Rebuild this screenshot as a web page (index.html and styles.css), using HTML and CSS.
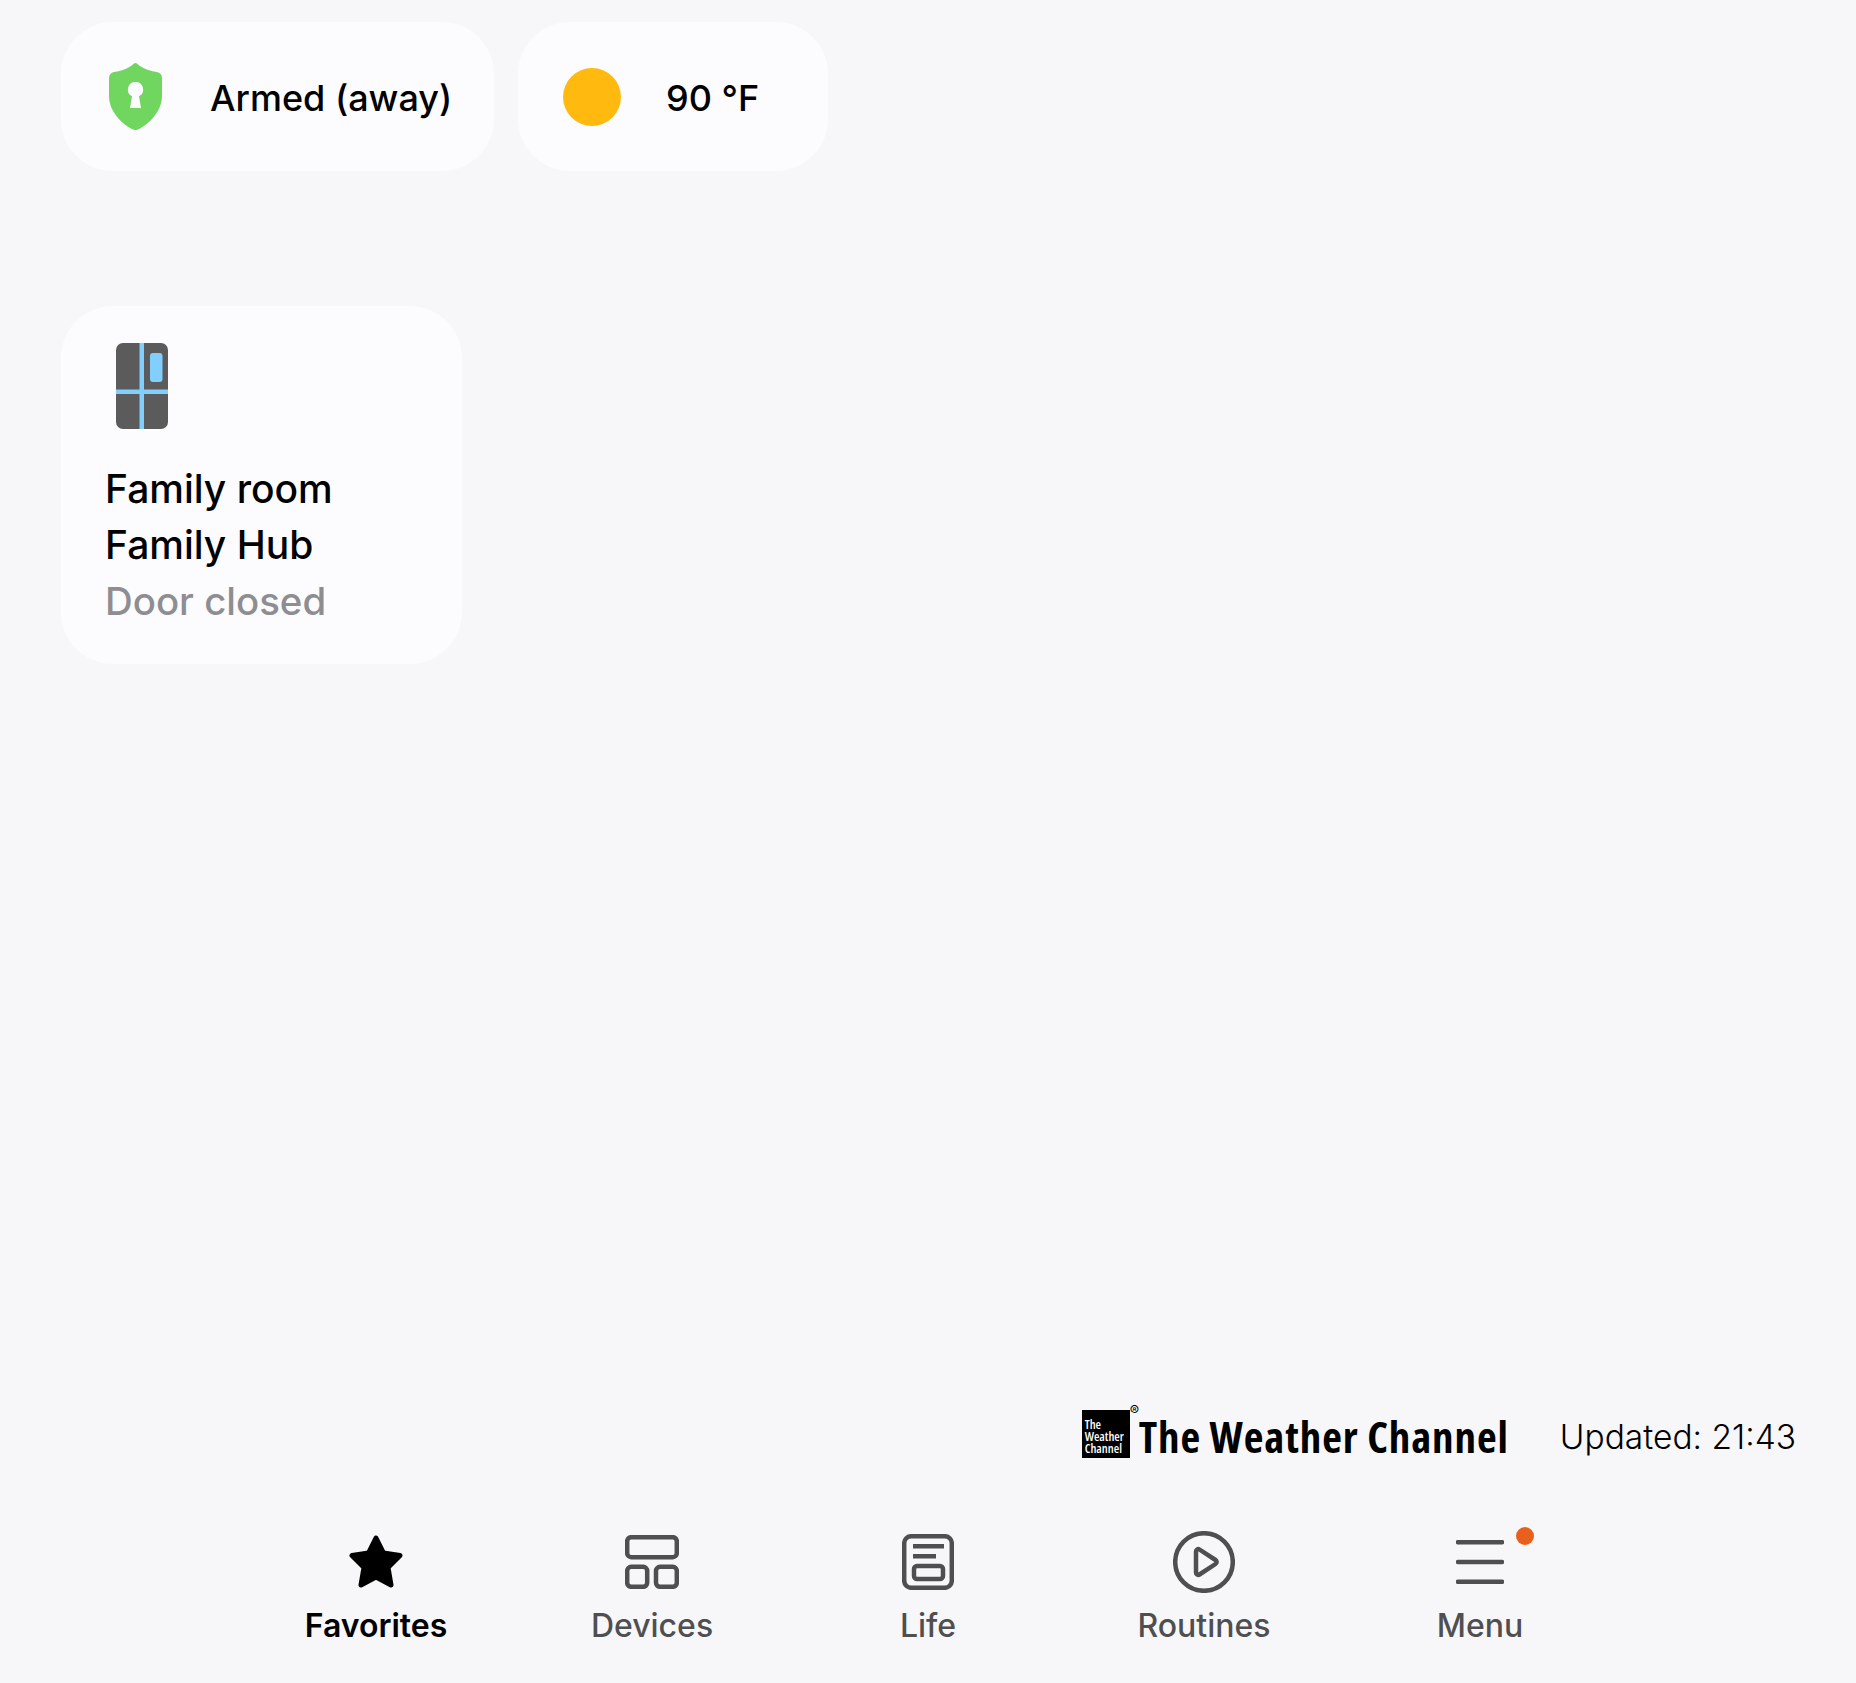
FILE: index.html
```html
<!doctype html>
<html lang="en">

<head>
  <meta charset="utf-8">
  <meta name="viewport" content="width=device-width, initial-scale=1">
  <title>Favorites</title>
  <link rel="stylesheet" href="styles.css">
</head>

<body>
  <main class="page">
    <div class="status-row">
      <div class="status-card status-mode">
        <svg class="icon-shield" viewBox="0 0 53 67">
          <path fill="#70d65f" d="M26.500 0C28 0 29 1.500 31 3C36 6.500 42 8 48 9C51 9.500 53 11.500 53 15V33C53 47 42 60 29 66.500C27.500 67.200 25.500 67.200 24 66.500C11 60 0 47 0 33V15C0 11.500 2 9.500 5 9C11 8 17 6.500 22 3C24 1.500 25 0 26.500 0Z"/>
          <path fill="#fcfcfe" d="M26.500 19A7.500 7.500 0 0 1 30 33.200L32 45H21L23 33.200A7.500 7.500 0 0 1 26.500 19Z"/>
        </svg>
        <span class="status-text">Armed (away)</span>
      </div>
      <div class="status-card status-weather">
        <span class="sun"></span>
        <span class="status-text">90 °F</span>
      </div>
    </div>

    <div class="device-card">
      <svg class="icon-fridge" viewBox="0 0 52 86">
        <rect width="52" height="86" rx="7" fill="#5b5b5b"/>
        <rect x="23.500" width="4.500" height="86" fill="#82ceff"/>
        <rect y="46.500" width="52" height="4.500" fill="#82ceff"/>
        <rect x="34" y="10" width="12.500" height="29" rx="3" fill="#82ceff"/>
      </svg>
      <div class="device-name">Family room</div>
      <div class="device-name">Family Hub</div>
      <div class="device-state">Door closed</div>
    </div>

    <div class="weather-row">
      <div class="twc">
        <div class="twc-box">The<br>Weather<br>Channel</div>
        <span class="twc-reg">®</span>
        <span class="twc-name">The Weather Channel</span>
      </div>
      <div class="updated">Updated: 21:43</div>
    </div>

    <nav class="nav">
      <div class="nav-item active">
        <div class="nav-icon">
          <svg width="54" height="54" viewBox="0 0 54 54">
            <polygon points="27,3 34.500,18 51,20.500 39,32.500 42,50 27,42 12,50 15,32.500 3,20.500 19.500,18" fill="#000" stroke="#000" stroke-width="5" stroke-linejoin="round"/>
          </svg>
        </div>
        <span>Favorites</span>
      </div>
      <div class="nav-item">
        <div class="nav-icon">
          <svg width="54" height="54" viewBox="0 0 54 54" fill="none" stroke="#4f4f51" stroke-width="4.500">
            <rect x="2.200" y="2.200" width="49.600" height="20" rx="4"/>
            <rect x="2.200" y="31.800" width="20" height="20" rx="4"/>
            <rect x="31" y="31.800" width="20.800" height="20" rx="4"/>
          </svg>
        </div>
        <span>Devices</span>
      </div>
      <div class="nav-item">
        <div class="nav-icon">
          <svg width="52" height="56" viewBox="0 0 52 56" fill="none" stroke="#4f4f51" stroke-width="4.500">
            <rect x="2.200" y="2.200" width="47.600" height="51.600" rx="7"/>
            <rect x="11" y="10" width="31" height="4.500" fill="#4f4f51" stroke="none"/>
            <rect x="11" y="20" width="23" height="4.500" fill="#4f4f51" stroke="none"/>
            <rect x="12" y="32" width="29" height="13" rx="3"/>
          </svg>
        </div>
        <span>Life</span>
      </div>
      <div class="nav-item">
        <div class="nav-icon">
          <svg width="62" height="62" viewBox="0 0 62 62" fill="none" stroke="#4f4f51" stroke-width="4.500">
            <circle cx="31" cy="31" r="28.800"/>
            <path d="M23 20.500C23 18.500 25 17.500 26.500 18.500L42.500 29C44 30 44 32 42.500 33L26.500 43.500C25 44.500 23 43.500 23 41.500Z" stroke-linejoin="round"/>
          </svg>
        </div>
        <span>Routines</span>
      </div>
      <div class="nav-item">
        <div class="nav-icon">
          <svg width="48" height="44" viewBox="0 0 48 44" fill="none" stroke="#4f4f51" stroke-width="4.500" stroke-linecap="round">
            <path d="M2 2.200H46M2 22H46M2 41.800H46"/>
          </svg>
          <span class="nav-badge"></span>
        </div>
        <span>Menu</span>
      </div>
    </nav>
  </main>
</body>

</html>
```

FILE: styles.css
```css
html, body {
  height: 100%;
  margin: 0;
  background-color: #f7f7f9;
  font-family: Inter, "Noto Sans", sans-serif;
  color: #000;
}

.page {
  height: 100%;
  box-sizing: border-box;
  display: flex;
  flex-direction: column;
  padding: 22px 61px 0;
}

.status-row {
  display: flex;
  gap: 24px;
}

.status-card {
  height: 149px;
  box-sizing: border-box;
  display: flex;
  align-items: center;
  background-color: #fcfcfe;
  border-radius: 52px;
}

.status-mode {
  width: 433px;
  padding-left: 48px;
}

.status-weather {
  width: 310px;
  padding-left: 45px;
}

.status-text {
  padding-top: 2px;
  font-size: 36px;
  font-weight: 500;
}

.icon-shield {
  width: 53px;
  height: 67px;
  margin-right: 48px;
}

.sun {
  width: 58px;
  height: 58px;
  margin-right: 45px;
  border-radius: 50%;
  background-color: #ffb90f;
}

.device-card {
  width: 401px;
  height: 358px;
  box-sizing: border-box;
  margin-top: 135px;
  padding: 37px 44px 0;
  background-color: #fcfcfe;
  border-radius: 52px;
}

.icon-fridge {
  display: block;
  width: 52px;
  height: 86px;
  margin: 0 0 32px 11px;
}

.device-name, .device-state {
  font-size: 39px;
  font-weight: 550;
  line-height: 56px;
}

.device-state {
  font-size: 38.400px;
  color: #8e8e92;
}

.weather-row {
  margin-top: auto;
  display: flex;
  justify-content: flex-end;
  align-items: center;
}

.twc {
  position: relative;
  display: flex;
  align-items: center;
}

.twc-box {
  width: 48px;
  height: 48px;
  box-sizing: border-box;
  margin-bottom: 5px;
  padding: 9px 0 0 3px;
  background-color: #000;
  color: #fff;
  font-family: "Open Sans", sans-serif;
  font-stretch: 75%;
  font-size: 12.500px;
  font-weight: 600;
  line-height: 12px;
}

.twc-reg {
  position: absolute;
  left: 48px;
  top: -3px;
  font-size: 14px;
  line-height: 14px;
}

.twc-name {
  margin-left: 9px;
  font-family: "Open Sans", sans-serif;
  font-stretch: 75%;
  font-size: 43px;
  font-weight: 700;
  letter-spacing: .9px;
}

.updated {
  margin-left: 51px;
  margin-right: -1px;
  font-size: 33.500px;
  font-weight: 300;
}

.nav {
  display: grid;
  grid-template-columns: repeat(5, 276px);
  justify-content: center;
  margin-top: 65px;
  padding-bottom: 38px;
  font-size: 32px;
  font-weight: 500;
  color: #4f4f51;
}

.nav-item {
  display: flex;
  flex-direction: column;
  align-items: center;
}

.nav-item.active {
  color: #000;
  font-weight: 600;
}

.nav-icon {
  position: relative;
  height: 62px;
  margin-bottom: 13px;
  display: flex;
  align-items: center;
}

.nav-badge {
  position: absolute;
  right: -30px;
  top: -4px;
  width: 18px;
  height: 18px;
  border-radius: 50%;
  background-color: #e8601c;
}
```
